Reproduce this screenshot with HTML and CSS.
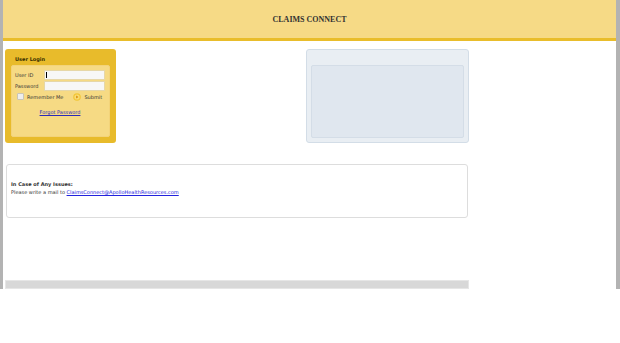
FILE: index.html
```html
<!DOCTYPE html>
<html lang="en">
<head>
<meta charset="UTF-8">
<meta name="viewport" content="width=device-width, initial-scale=1.0">
<title>Claims Connect</title>
<link rel="stylesheet" href="styles.css">
</head>
<body>
<div id="page">
  <div id="header">
    <div id="title">CLAIMS CONNECT</div>
  </div>

  <div class="top-row">
    <!-- Login box -->
    <div class="login-box">
      <div class="login-heading">User Login</div>
      <div class="login-inner">
        <div class="field-row">
          <label class="field-label">User ID</label>
          <div class="field-input focused"></div>
        </div>
        <div class="field-row">
          <label class="field-label">Password</label>
          <div class="field-input"></div>
        </div>
        <div class="option-row">
          <span class="checkbox"></span>
          <span class="option-text">Remember Me</span>
          <span class="submit-icon">
            <svg width="8" height="8" viewBox="0 0 8 8">
              <circle cx="4" cy="4" r="3.8" fill="#f2c536"/>
              <circle cx="4" cy="4" r="2.6" fill="#f9dc74"/>
              <path d="M3.2 2.4 L5.4 4 L3.2 5.6 Z" fill="#d98b0c"/>
            </svg>
          </span>
          <span class="option-text">Submit</span>
        </div>
        <div class="forgot-row"><a href="#">Forgot Password</a></div>
      </div>
    </div>

    <!-- Right panel -->
    <div class="info-panel">
      <div class="info-inner"></div>
    </div>
  </div>

  <div class="issues-box">
    <div class="issues-title">In Case of Any Issues:</div>
    <div class="issues-text">Please write a mail to <a href="#">ClaimsConnect@ApolloHealthResources.com</a></div>
  </div>

  <div class="footer-bar"></div>
</div>
</body>
</html>
```

FILE: styles.css
```css
body {
  margin: 0;
  font-family: "DejaVu Sans", Verdana, sans-serif;
  background-color: #ffffff;
}

#page {
  width: 613px;
  height: 289px;
  border-left: 3px solid #b3b3b3;
  border-right: 4px solid #b3b3b3;
  display: flex;
  flex-direction: column;
}

#header {
  height: 38px;
  background-color: #f6da86;
  border-bottom: 3px solid #e9bd2b;
  display: flex;
  justify-content: center;
  align-items: center;
}

#title {
  font-family: "Liberation Serif", "Times New Roman", serif;
  font-weight: bold;
  font-size: 8px;
  color: #333333;
  padding-top: 1px;
}

.top-row {
  display: flex;
  margin-top: 8px;
  padding-left: 2px;
}

/* login */
.login-box {
  width: 99px;
  height: 88px;
  background-color: #e8bb2b;
  border-radius: 3px;
  padding: 0 6px 6px 6px;
  display: flex;
  flex-direction: column;
}

.login-heading {
  height: 16px;
  line-height: 20px;
  font-size: 5px;
  font-weight: bold;
  color: #3a3000;
  padding-left: 4px;
}

.login-inner {
  flex: 1;
  background-color: #f6da84;
  border: 1px solid #f3d37a;
  border-radius: 2px;
  padding: 4px 4px 0 3px;
}

.field-row {
  display: flex;
  align-items: center;
  height: 10px;
  margin-bottom: 1px;
}

.field-label {
  width: 29px;
  font-size: 5px;
  color: #333333;
}

.field-input {
  width: 60px;
  height: 8px;
  background-color: #f7f7f7;
  border: 1px solid #e6d7a8;
  position: relative;
}

.field-input.focused::before {
  content: "";
  position: absolute;
  left: 1px;
  top: 1px;
  width: 1px;
  height: 6px;
  background-color: #000000;
}

.option-row {
  display: flex;
  align-items: center;
  height: 9px;
  white-space: nowrap;
}

.checkbox {
  width: 5px;
  height: 5px;
  margin-left: 2px;
  background-color: #eeeeee;
  border: 1px solid #c9c5b8;
  border-radius: 1px;
}

.option-text {
  font-size: 5px;
  color: #333333;
  margin-left: 3px;
}

.submit-icon {
  display: flex;
  margin-left: 10px;
}

.forgot-row {
  text-align: center;
  margin-top: 8px;
  font-size: 5px;
}

.forgot-row a {
  color: #2a2ab8;
}

/* right panel */
.info-panel {
  width: 163px;
  height: 94px;
  margin-left: 190px;
  box-sizing: border-box;
  background-color: #e9eef3;
  border: 1px solid #d3dde7;
  border-radius: 3px;
  padding: 15px 4px 4px 4px;
  display: flex;
}

.info-inner {
  flex: 1;
  background-color: #e0e7ef;
  border: 1px solid #d4dde7;
  border-radius: 2px;
}

/* issues */
.issues-box {
  width: 462px;
  height: 54px;
  box-sizing: border-box;
  margin: 21px 0 0 3px;
  border: 1px solid #dddddd;
  border-radius: 3px;
  padding: 16px 0 0 4px;
  font-size: 5px;
  color: #333333;
}

.issues-title {
  font-weight: bold;
  margin-bottom: 2px;
}

.issues-text a {
  color: #2222dd;
}

.footer-bar {
  width: 464px;
  height: 9px;
  box-sizing: border-box;
  margin: 62px 0 0 2px;
  background-color: #d8d8d8;
  border: 1px solid #e6e6e6;
}
```
